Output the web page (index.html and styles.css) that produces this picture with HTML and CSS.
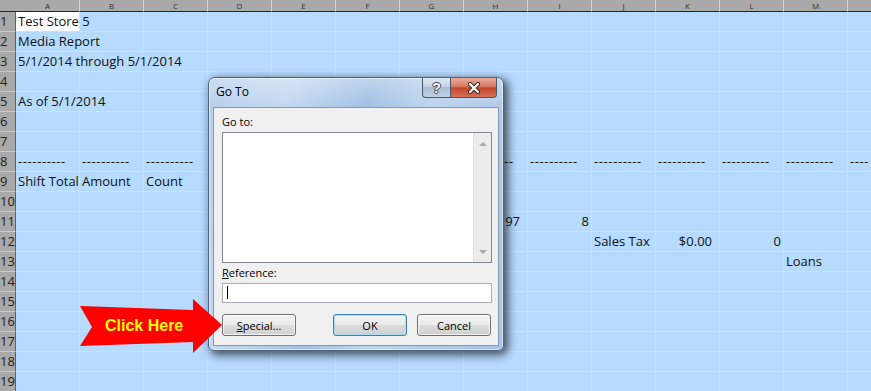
FILE: index.html
```html
<!DOCTYPE html>
<html lang="en">
<head>
  <meta charset="UTF-8" />
  <meta name="viewport" content="width=device-width, initial-scale=1" />
  <title>Media Report - Go To</title>
  <link rel="stylesheet" href="styles.css">
</head>
<body>
  <div class="sheet" id="sheet"></div>

  <!-- Go To dialog -->
  <div class="dialog">
    <div class="titlebar">
      <span class="title">Go To</span>
      <div class="caption-btns">
        <span class="cap-btn help">?</span>
        <span class="cap-btn close">
          <svg width="16" height="12" viewBox="0 0 16 12">
            <path d="M4 2 L12 10 M12 2 L4 10" stroke="#3b2a26" stroke-width="4.2" stroke-linecap="round" fill="none" />
            <path d="M4 2 L12 10 M12 2 L4 10" stroke="#ffffff" stroke-width="2.2" stroke-linecap="round" fill="none" />
          </svg>
        </span>
      </div>
    </div>
    <div class="panel">
      <label class="lbl lbl-top">Go to:</label>
      <div class="listbox">
        <div class="scroll">
          <span class="arrow up"></span>
          <span class="arrow down"></span>
        </div>
      </div>
      <label class="lbl lbl-ref"><u>R</u>eference:</label>
      <div class="input"><span class="caret"></span></div>
      <div class="btns">
        <button class="btn"><u>S</u>pecial...</button>
        <button class="btn default">OK</button>
        <button class="btn cancel">Cancel</button>
      </div>
    </div>
  </div>

  <!-- Callout arrow -->
  <svg class="callout" width="146" height="58" viewBox="0 0 146 58">
    <polygon points="2,9 115,13 115,2 144,28 115,56 115,45 2,49 14,30" fill="#ff0000" />
    <text x="27" y="34" class="callout-text">Click Here</text>
  </svg>

  <script>
    const columns = "ABCDEFGHIJKLMN".split("");
    const rowCount = 19;

    const data = {
      A1: { text: "Test Store 5", cls: "active" },
      A2: { text: "Media Report", span: 2 },
      A3: { text: "5/1/2014 through 5/1/2014", span: 3 },
      A5: { text: "As of 5/1/2014", span: 2 },
      A9: { text: "Shift Total" },
      B9: { text: "Amount" },
      C9: { text: "Count" },
      H11: { text: "97", cls: "num acct" },
      I11: { text: "8", cls: "num" },
      J12: { text: "Sales Tax" },
      K12: { text: "$0.00", cls: "num acct" },
      L12: { text: "0", cls: "num" },
      M13: { text: "Loans" }
    };
    // last column is only partly on screen
    columns.forEach(c => data[c + "8"] = { text: c === "N" ? "----" : "----------", cls: "dash" });

    const sheet = document.getElementById("sheet");
    let html = '<div class="corner"></div>';
    columns.forEach(c => html += `<div class="colhead">${c === "N" ? "" : c}</div>`);

    for (let r = 1; r <= rowCount; r++) {
      html += `<div class="rowhead">${r}</div>`;
      for (let i = 0; i < columns.length; i++) {
        const cell = data[columns[i] + r] || { text: "" };
        const span = cell.span || 1;
        html += `<div class="cell span-${span} ${cell.cls || ""}">${cell.text}</div>`;
        i += span - 1;
      }
    }
    sheet.innerHTML = html;
  </script>
</body>
</html>
```

FILE: styles.css
```css
body {
  margin: 0;
  width: 871px;
  height: 391px;
  overflow: hidden;
  position: relative;
  background: #b7daff;
  font-family: "Open Sans", "Noto Sans", sans-serif;
}

/* Spreadsheet */
.sheet {
  display: grid;
  grid-template-columns: 16px repeat(14, 64px);
  grid-template-rows: 12px repeat(19, 20px);
}

.corner,
.colhead {
  background: #a9a9a9;
  border-bottom: 1px solid #262626;
  box-sizing: border-box;
}

.colhead {
  border-right: 1px solid #d3d3d3;
  text-align: center;
  font-size: 8px;
  line-height: 11px;
  color: #333;
}

.rowhead {
  background: #a9a9a9;
  border-right: 1px solid #5f5f5f;
  border-bottom: 1px solid #c9c9c9;
  box-sizing: border-box;
  font-size: 13px;
  line-height: 19px;
  color: #222;
  white-space: nowrap;
}

.cell {
  box-sizing: border-box;
  border-right: 1px solid #e4dccd;
  border-bottom: 1px solid #e4dccd;
  padding: 0 2px;
  font-size: 13px;
  line-height: 19px;
  color: #111;
  white-space: nowrap;
  min-width: 0;
}

.span-2 { grid-column: span 2; }
.span-3 { grid-column: span 3; }

.cell.active { background: #fff; }
.cell.num { text-align: right; }
.cell.acct { padding-right: 7px; }
.cell.dash { letter-spacing: 0.6px; }

/* Dialog */
.dialog {
  position: absolute;
  left: 208px;
  top: 77px;
  width: 296px;
  height: 274px;
  box-sizing: border-box;
  border: 1px solid #4f6178;
  border-radius: 7px 7px 6px 6px;
  background:
    linear-gradient(180deg, rgba(255, 255, 255, 0.3), rgba(255, 255, 255, 0) 28px),
    linear-gradient(105deg, #b6cfeb 0%, #c4daf1 22%, #a2c1e5 45%, #bcd4ee 62%, #a4c3e6 100%);
  box-shadow: 3px 3px 10px 1px rgba(0, 0, 0, 0.65), inset 0 0 0 1px rgba(255, 255, 255, 0.55);
  display: flex;
  flex-direction: column;
  font-size: 11px;
  color: #000;
}

.titlebar {
  height: 29px;
  display: flex;
  align-items: flex-start;
}

.title {
  padding-left: 7px;
  font-size: 12px;
  line-height: 28px;
}

.caption-btns {
  margin-left: auto;
  margin-right: 6px;
  display: flex;
}

.cap-btn {
  height: 20px;
  box-sizing: border-box;
  border: 1px solid #4a5768;
  border-top: none;
  display: flex;
  align-items: center;
  justify-content: center;
}

.help {
  width: 28px;
  border-right: none;
  border-radius: 0 0 0 4px;
  background: linear-gradient(#dde7f2, #c5d5e7 45%, #a9bdd5 50%, #bfd1e5);
  color: #fff;
  font-family: "Liberation Sans", Arial, sans-serif;
  font-weight: bold;
  font-size: 14px;
  text-shadow: 0 0 1px #3a4656, 1px 0 0 #3a4656, -1px 0 0 #3a4656, 0 1px 0 #3a4656, 0 -1px 0 #3a4656;
}

.close {
  width: 47px;
  border-radius: 0 0 4px 0;
  background: linear-gradient(#eaa99b, #d87a63 45%, #c4452b 52%, #d3735a);
}

.panel {
  flex: 1;
  margin: 0 4px 4px;
  background: #f0f0f0;
  border: 1px solid #8599b0;
  padding: 6px 6px 9px 8px;
  display: flex;
  flex-direction: column;
}

.lbl {
  display: block;
  line-height: 15px;
}

.lbl-top { margin-bottom: 3px; }
.lbl-ref { margin: 2px 0 3px; }

.listbox {
  height: 131px;
  box-sizing: border-box;
  border: 1px solid #828790;
  background: #fff;
  display: flex;
  justify-content: flex-end;
}

.scroll {
  width: 17px;
  background: #ececec;
  border-left: 1px solid #e0e0e0;
  display: flex;
  flex-direction: column;
  justify-content: space-between;
  align-items: center;
  padding: 9px 0 8px;
}

.arrow {
  width: 0;
  height: 0;
  border-left: 4px solid transparent;
  border-right: 4px solid transparent;
}

.arrow.up { border-bottom: 4px solid #a9a9a9; }
.arrow.down { border-top: 4px solid #a9a9a9; }

.input {
  height: 20px;
  box-sizing: border-box;
  border: 1px solid #abadb3;
  background: #fff;
  padding: 2px 4px;
}

.caret {
  display: block;
  height: 13px;
  border-left: 1px solid #000;
}

.btns {
  margin-top: 11px;
  display: flex;
  gap: 10px;
}

.btn {
  width: 74px;
  height: 22px;
  padding: 0;
  border: 1px solid #707070;
  border-radius: 3px;
  background: linear-gradient(#f3f3f3 0%, #ebebeb 48%, #dddddd 52%, #cfcfcf 100%);
  box-shadow: inset 0 0 0 1px rgba(255, 255, 255, 0.7);
  font-family: "Open Sans", "Noto Sans", sans-serif;
  font-size: 11px;
  color: #000;
}

.btn.default {
  margin-left: auto;
  border-color: #3c7fb1;
  box-shadow: inset 0 0 0 1px #a9dcf5;
}

.btn.cancel { margin-right: 1px; }

/* Callout */
.callout {
  position: absolute;
  left: 78px;
  top: 297px;
}

.callout-text {
  font-family: "Liberation Sans", Arial, sans-serif;
  font-weight: bold;
  font-size: 16px;
  fill: #ffff00;
}
```
